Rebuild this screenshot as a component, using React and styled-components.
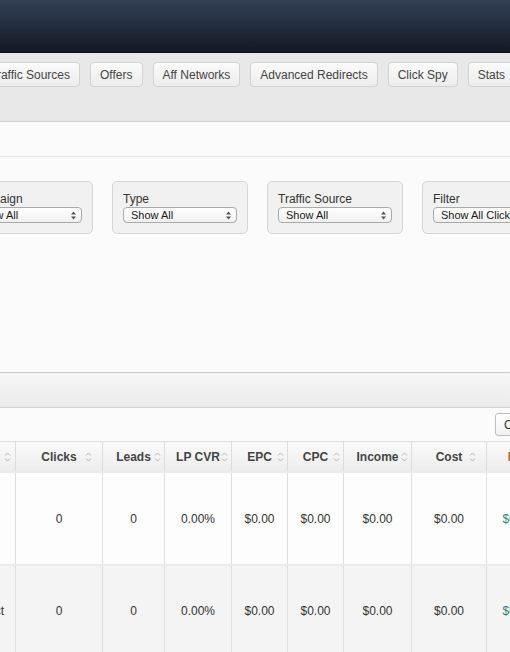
import styled, { createGlobalStyle } from 'styled-components';

const GlobalStyle = createGlobalStyle`
  html, body {
    margin: 0;
    padding: 0;
    background: #fafafa;
    overflow: hidden;
  }
  body {
    font-family: 'Liberation Sans', Helvetica, Arial, sans-serif;
    color: #333;
  }
`;

const Page = styled.div`
  width: 510px;
  height: 652px;
  overflow: hidden;
  background: #fafafa;
`;

const TopBar = styled.div`
  height: 52px;
  background: linear-gradient(to bottom, #323f55 0%, #232d3d 50%, #141a24 100%);
  border-bottom: 1px solid #0e121a;
`;

const NavArea = styled.div`
  height: 69px;
  background: #e8e8e8;
  border-bottom: 1px solid #cfcfcf;
  padding-top: 9px;
  box-sizing: border-box;
`;

const NavRow = styled.div`
  display: flex;
  gap: 10px;
  margin-left: -20px;
`;

const NavButton = styled.button`
  flex: none;
  height: 25px;
  padding: 0 9px;
  font-family: inherit;
  font-size: 12px;
  color: #444;
  background: linear-gradient(to bottom, #fbfbfb 0%, #ececec 100%);
  border: 1px solid #d2d2d2;
  border-radius: 4px;
  box-shadow: 0 1px 0 rgba(255, 255, 255, 0.8) inset;
`;

const SubBar = styled.div`
  height: 34px;
  background: #fbfbfb;
  border-bottom: 1px solid #e4e4e4;
`;

const FilterArea = styled.div`
  height: 216px;
  background: #fbfbfb;
  border-bottom: 1px solid #cccccc;
  padding-top: 24px;
  box-sizing: border-box;
`;

const FilterRow = styled.div`
  display: flex;
  gap: 19px;
  margin-left: -43px;
`;

const FilterBox = styled.div`
  flex: none;
  width: 136px;
  height: 53px;
  box-sizing: border-box;
  padding: 10px 10px 0;
  background: #f1f1f1;
  border: 1px solid #d6d6d6;
  border-radius: 5px;
  display: flex;
  flex-direction: column;
`;

const FilterLabel = styled.div`
  font-size: 12px;
  color: #333;
  line-height: 14px;
`;

const Select = styled.div`
  position: relative;
  margin-top: 1px;
  height: 16px;
  box-sizing: border-box;
  padding: 0 14px 0 7px;
  font-size: 11px;
  line-height: 14px;
  color: #1a1a1a;
  white-space: nowrap;
  overflow: hidden;
  background: linear-gradient(to bottom, #ffffff 0%, #f0f0f0 100%);
  border: 1px solid #a9a9a9;
  border-radius: 4px;
  width: ${p => (p.$wide ? '140px' : 'auto')};
`;

const SelectArrows = styled.svg`
  position: absolute;
  right: 5px;
  top: 3px;
`;

const ToolBar = styled.div`
  height: 34px;
  background: linear-gradient(to bottom, #f6f6f6 0%, #ebebeb 100%);
  border-bottom: 1px solid #d4d4d4;
`;

const ActionRow = styled.div`
  height: 33px;
  display: flex;
  align-items: center;
  padding-left: 495px;
  background: #fbfbfb;
`;

const SmallButton = styled.button`
  flex: none;
  height: 23px;
  padding: 0 8px;
  font-family: inherit;
  font-size: 12px;
  color: #333;
  background: linear-gradient(to bottom, #ffffff 0%, #f1f1f1 100%);
  border: 1px solid #bdbdbd;
  border-radius: 3px;
  white-space: nowrap;
`;

const Table = styled.table`
  border-collapse: collapse;
  table-layout: fixed;
  margin-left: -85px;
  width: 633px;
  font-size: 12px;
`;

const HeadCell = styled.th`
  position: relative;
  height: 29px;
  padding: 0;
  font-weight: bold;
  color: ${p => p.$color || '#444'};
  background: linear-gradient(to bottom, #fbfbfb 0%, #ececec 100%);
  border: 1px solid #dcdcdc;
  border-top: 1px solid #e2e2e2;
  text-align: center;
  white-space: nowrap;
  overflow: hidden;
`;

const SortIcon = styled.svg`
  position: absolute;
  right: ${p => p.$right ?? 10}px;
  top: 10px;
`;

const Row = styled.tr`
  background: ${p => (p.$alt ? '#f4f4f4' : '#fdfdfd')};
`;

const Cell = styled.td`
  height: ${p => p.$h}px;
  padding: 0;
  text-align: center;
  color: ${p => p.$color || '#333'};
  border-left: 1px solid #dedede;
  border-right: 1px solid #dedede;
  border-top: 2px solid #ebebeb;
  white-space: nowrap;
`;

const FirstCell = styled(Cell)`
  text-align: right;
  padding-right: 11px;
`;

const Sort = ({ right }) => (
  <SortIcon $right={right} width="7" height="10" viewBox="0 0 7 10">
    <path d="M1 3.5 L3.5 1 L6 3.5 M1 6.5 L3.5 9 L6 6.5" stroke="#b4b4b4" strokeWidth="1" fill="none" />
  </SortIcon>
);

const Arrows = () => (
  <SelectArrows width="5" height="9" viewBox="0 0 5 9">
    <path d="M0 3.5 L2.5 0.5 L5 3.5 Z M0 5.5 L2.5 8.5 L5 5.5 Z" fill="#555" />
  </SelectArrows>
);

const navItems = ['Traffic Sources', 'Offers', 'Aff Networks', 'Advanced Redirects', 'Click Spy', 'Stats', 'Settings'];

const filters = [
  { label: 'Campaign', value: 'Show All' },
  { label: 'Type', value: 'Show All' },
  { label: 'Traffic Source', value: 'Show All' },
  { label: 'Filter', value: 'Show All Clicks' },
];

const columns = [
  { name: 'Campaign', w: 100, right: 4 },
  { name: 'Clicks', w: 87 },
  { name: 'Leads', w: 62, right: 3 },
  { name: 'LP CVR', w: 67, right: 3 },
  { name: 'EPC', w: 56, right: 3 },
  { name: 'CPC', w: 56, right: 3 },
  { name: 'Income', w: 68, right: 3 },
  { name: 'Cost', w: 75 },
  { name: 'Net', w: 62, color: '#b8652a' },
];

const rows = [
  { name: '', h: 91 },
  { name: 'Direct', h: 90, alt: true },
];

export default function App() {
  return (
    <Page>
      <GlobalStyle />
      <TopBar />
      <NavArea>
        <NavRow>
          {navItems.map(item => (
            <NavButton key={item}>{item}</NavButton>
          ))}
        </NavRow>
      </NavArea>
      <SubBar />
      <FilterArea>
        <FilterRow>
          {filters.map((f, i) => (
            <FilterBox key={f.label}>
              <FilterLabel>{f.label}</FilterLabel>
              <Select $wide={i === 3}>
                {f.value}
                {i !== 3 && <Arrows />}
              </Select>
            </FilterBox>
          ))}
        </FilterRow>
      </FilterArea>
      <ToolBar />
      <ActionRow>
        <SmallButton>Columns</SmallButton>
      </ActionRow>
      <Table>
        <colgroup>
          {columns.map(c => (
            <col key={c.name} style={{ width: c.w }} />
          ))}
        </colgroup>
        <thead>
          <tr>
            {columns.map(c => (
              <HeadCell key={c.name} $color={c.color}>
                {c.name}
                {!c.color && <Sort right={c.right} />}
              </HeadCell>
            ))}
          </tr>
        </thead>
        <tbody>
          {rows.map(r => (
            <Row key={r.h} $alt={r.alt}>
              <FirstCell $h={r.h}>{r.name}</FirstCell>
              <Cell>0</Cell>
              <Cell>0</Cell>
              <Cell>0.00%</Cell>
              <Cell>$0.00</Cell>
              <Cell>$0.00</Cell>
              <Cell>$0.00</Cell>
              <Cell>$0.00</Cell>
              <Cell $color="#2e7f7c">$0.00</Cell>
            </Row>
          ))}
        </tbody>
      </Table>
    </Page>
  );
}
